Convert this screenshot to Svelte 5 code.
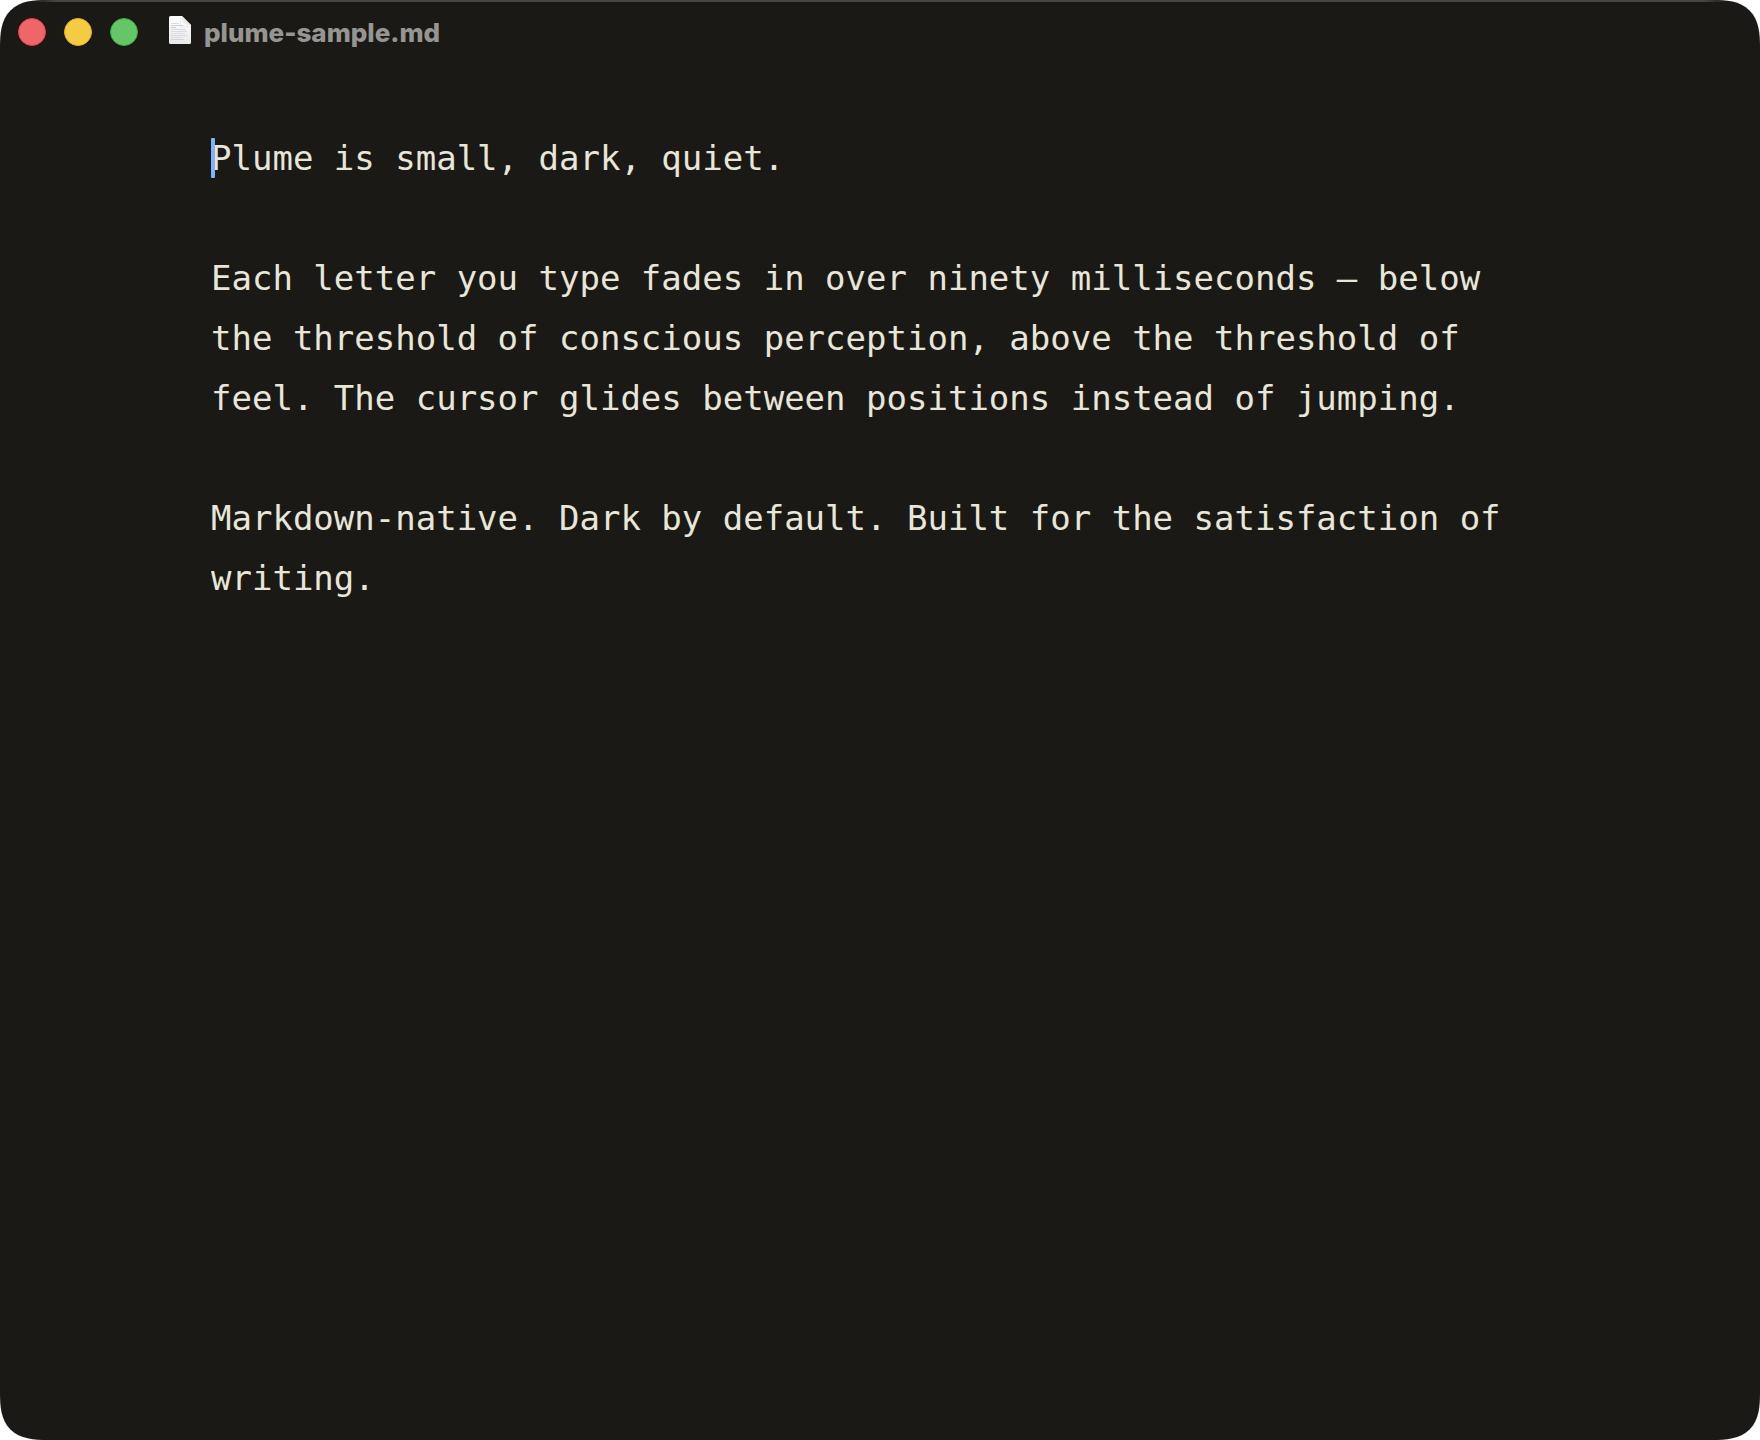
<script lang="ts">
  let filename = 'plume-sample.md';

  let text = $state(
    [
      'Plume is small, dark, quiet.',
      'Each letter you type fades in over ninety milliseconds — below the threshold of conscious perception, above the threshold of feel. The cursor glides between positions instead of jumping.',
      'Markdown-native. Dark by default. Built for the satisfaction of writing.',
    ].join('\n\n')
  );
</script>

<div class="window">
  <header class="titlebar">
    <div class="lights">
      <button type="button" class="light close" aria-label="Close"></button>
      <button type="button" class="light minimize" aria-label="Minimize"></button>
      <button type="button" class="light zoom" aria-label="Zoom"></button>
    </div>
    <svg class="doc" viewBox="0 0 22 28" aria-hidden="true">
      <defs>
        <linearGradient id="paper" x1="0" y1="0" x2="0" y2="1">
          <stop offset="0" stop-color="#ffffff" />
          <stop offset="1" stop-color="#e9e9ea" />
        </linearGradient>
        <linearGradient id="fold" x1="0" y1="1" x2="1" y2="0">
          <stop offset="0" stop-color="#ffffff" />
          <stop offset="0.5" stop-color="#e4e4e4" />
        </linearGradient>
      </defs>
      <path d="M1.500 0H13L22 9V26.500Q22 28 20.500 28H1.500Q0 28 0 26.500V1.500Q0 0 1.500 0Z" fill="url(#paper)" />
      <path d="M12 1V8.500Q12 10 13.500 10H21V11H13Q11 11 11 9V1Z" fill="#d4d4d4" opacity="0.35" />
      <path d="M13 0L22 9H14.500Q13 9 13 7.500Z" fill="url(#fold)" />
      <g fill="none" stroke-width="1">
        <path d="M2 7.500H10" stroke="#c4e4e0" />
        <path d="M2 9.500H14" stroke="#c0d2ee" />
        <path d="M2 11.500H7" stroke="#f3b6ca" />
        <path d="M2 13.500H17M2 15.500H18" stroke="#d9dcde" />
        <path d="M2 17.500H16" stroke="#dcdfe0" />
        <path d="M2 19.500H18" stroke="#dad6e4" />
        <path d="M2 21.500H13" stroke="#dcdfe0" />
        <path d="M2 23.500H15" stroke="#cbd4e6" />
      </g>
    </svg>
    <h1 class="title">{filename}</h1>
  </header>

  <main class="page">
    <span class="caret"></span>
    <textarea class="editor" aria-label={filename} spellcheck="false" bind:value={text}></textarea>
  </main>
</div>

<style>
  :global(body) {
    margin: 0;
    background: #fff;
  }

  .window {
    position: relative;
    display: flex;
    flex-direction: column;
    box-sizing: border-box;
    min-height: 100vh;
    overflow: hidden;
    border-radius: 34px;
    background: #1a1915;
  }

  @supports (corner-shape: superellipse(1.5)) {
    .window {
      border-radius: 48px;
      corner-shape: superellipse(1.5);
    }
  }

  /* highlight along the top edge */
  .window::before {
    content: '';
    position: absolute;
    top: 0;
    left: 32px;
    right: 32px;
    height: 2px;
    background: linear-gradient(90deg, transparent, #454542 24px, #454542 calc(100% - 24px), transparent);
  }

  .titlebar {
    display: flex;
    align-items: center;
    height: 64px;
    padding: 0 18px;
  }

  .lights {
    display: flex;
    gap: 18px;
    margin-right: 31px;
  }

  .light {
    width: 28px;
    height: 28px;
    padding: 0;
    border: 1px solid;
    border-radius: 50%;
  }

  .close {
    background: #ef6668;
    border-color: #e24146;
  }

  .minimize {
    background: #f5cb44;
    border-color: #e5b21f;
  }

  .zoom {
    background: #66c566;
    border-color: #34ac3c;
  }

  .doc {
    width: 22px;
    height: 28px;
    margin: 0 13px 4px 0;
  }

  .title {
    margin: 0;
    font-family: Inter, sans-serif;
    font-size: 26px;
    font-weight: 800;
    line-height: 34px;
    padding-top: 2px;
    color: #979592;
  }

  .page {
    position: relative;
    display: flex;
    flex: 1;
    padding: 64px 209px 64px 211px;
  }

  .caret {
    position: absolute;
    top: 74px;
    left: 211px;
    width: 4px;
    height: 40px;
    border-radius: 1px;
    background: #80b1fb;
    pointer-events: none;
  }

  .editor {
    flex: 1;
    min-width: 0;
    padding: 0;
    border: 0;
    outline: 0;
    resize: none;
    overflow: hidden;
    background: transparent;
    color: #e8e6d9;
    caret-color: transparent;
    font-family: 'DejaVu Sans Mono', monospace;
    font-size: 34px;
    line-height: 60px;
  }
</style>
